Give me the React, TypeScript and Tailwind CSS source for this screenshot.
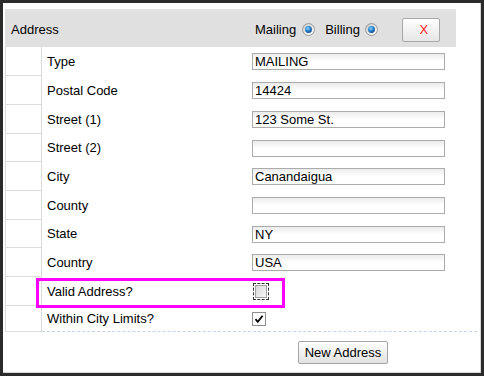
import React from "react";

function Radio() {
  return (
    <svg width="13" height="13" viewBox="0 0 13 13" className="block">
      <defs>
        <linearGradient id="rg" x1="0" y1="0" x2="1" y2="1">
          <stop offset="0" stopColor="#c8c8c8" />
          <stop offset="1" stopColor="#ffffff" />
        </linearGradient>
        <radialGradient id="dot" cx="0.4" cy="0.35" r="0.7">
          <stop offset="0" stopColor="#8fd3ff" />
          <stop offset="0.5" stopColor="#2a8ad6" />
          <stop offset="1" stopColor="#0b3f78" />
        </radialGradient>
      </defs>
      <circle cx="6.5" cy="6.5" r="6" fill="url(#rg)" stroke="#9a9a9a" strokeWidth="1" />
      <circle cx="6.5" cy="6.5" r="3.4" fill="url(#dot)" />
    </svg>
  );
}

function TextInput({ value }: { value: string }) {
  return (
    <div className="w-[193px] h-[17px] border border-[#ababab] bg-gradient-to-b from-[#ececec] via-white to-white pl-[2px] text-[13px] leading-[15px] text-black overflow-hidden whitespace-nowrap">
      {value}
    </div>
  );
}

type Row = { label: string; h: string; kind: "text" | "unchecked"; value?: string };

const rows: Row[] = [
  { label: "Type", h: "h-[29px]", kind: "text", value: "MAILING" },
  { label: "Postal Code", h: "h-[29px]", kind: "text", value: "14424" },
  { label: "Street (1)", h: "h-[29px]", kind: "text", value: "123 Some St." },
  { label: "Street (2)", h: "h-[28px]", kind: "text", value: "" },
  { label: "City", h: "h-[29px]", kind: "text", value: "Canandaigua" },
  { label: "County", h: "h-[29px]", kind: "text", value: "" },
  { label: "State", h: "h-[28px]", kind: "text", value: "NY" },
  { label: "Country", h: "h-[29px]", kind: "text", value: "USA" },
  { label: "Valid Address?", h: "h-[29px]", kind: "unchecked" },
];

export default function App() {
  return (
    <div
      className="w-[484px] h-[376px] bg-[#2b2b2b] p-[3px] text-black"
      style={{ fontFamily: '"Liberation Sans", Arial, sans-serif' }}
    >
      <div className="relative w-full h-full bg-white border-r border-b border-[#d6d6d6] pl-[2px] pt-[6px]">
        {/* Header */}
        <div className="w-[451px] h-[38px] bg-[#e0e0e0] border-t-[3px] border-[#e3e3e3] flex items-center text-[13px]">
          <span className="w-[250px] pl-[6px]">Address</span>
          <span>Mailing</span>
          <span className="ml-[6px]"><Radio /></span>
          <span className="ml-[10px]">Billing</span>
          <span className="ml-[5px]"><Radio /></span>
          <button className="ml-[24px] w-[38px] h-[24px] border border-[#a8a8a8] rounded-[2px] bg-gradient-to-b from-white to-[#e6e6e6] text-[13px] text-[#ff1a1a] flex items-center justify-center pl-[6px]">
            X
          </button>
        </div>

        {/* Rows */}
        <div className="w-[472px] flex flex-col">
          {rows.map((r) => (
            <div key={r.label} className={`flex ${r.h}`}>
              <div className="w-[37px] h-full border-l border-r border-b border-[#dcdcdc]" />
              <div className="w-[210px] h-full flex items-center pl-[5px] text-[13px]">{r.label}</div>
              <div className="flex-1 h-full flex items-center">
                {r.kind === "text" && <TextInput value={r.value ?? ""} />}
                {r.kind === "unchecked" && (
                  <div className="ml-[1px] w-[16px] h-[17px] border border-dashed border-[#333] flex items-center justify-center">
                    <div className="w-[12px] h-[13px] border border-[#a0a0a0] bg-gradient-to-br from-[#dadada] to-[#f6f6f6]" />
                  </div>
                )}
              </div>
            </div>
          ))}
          {/* Last row */}
          <div className="flex h-[26px]">
            <div className="w-[37px] h-full border-l border-r border-b border-[#dcdcdc]" />
            <div className="flex-1 h-full flex border-b border-dashed border-[#c2d6f4]">
              <div className="w-[210px] h-full flex items-center pl-[5px] text-[13px]">Within City Limits?</div>
              <div className="flex-1 h-full flex items-center">
                <div className="w-[14px] h-[14px] border border-[#8e8e8e] bg-white flex items-center justify-center">
                  <svg width="10" height="10" viewBox="0 0 10 10">
                    <path d="M1.5 5.2 L3.8 7.8 L8.6 1.8" fill="none" stroke="#000" strokeWidth="1.8" />
                  </svg>
                </div>
              </div>
            </div>
          </div>
        </div>

        {/* Button */}
        <div className="pt-[9px] pl-[293px]">
          <button className="w-[90px] h-[23px] border border-[#a4a4a4] rounded-[2px] bg-gradient-to-b from-white to-[#e2e2e2] text-[13px] text-black flex items-center justify-center">
            New Address
          </button>
        </div>

        {/* Annotation highlight */}
        <div className="absolute left-[33px] top-[275px] w-[249px] h-[30px] border-[3px] border-[#ff00ff]" />
      </div>
    </div>
  );
}
